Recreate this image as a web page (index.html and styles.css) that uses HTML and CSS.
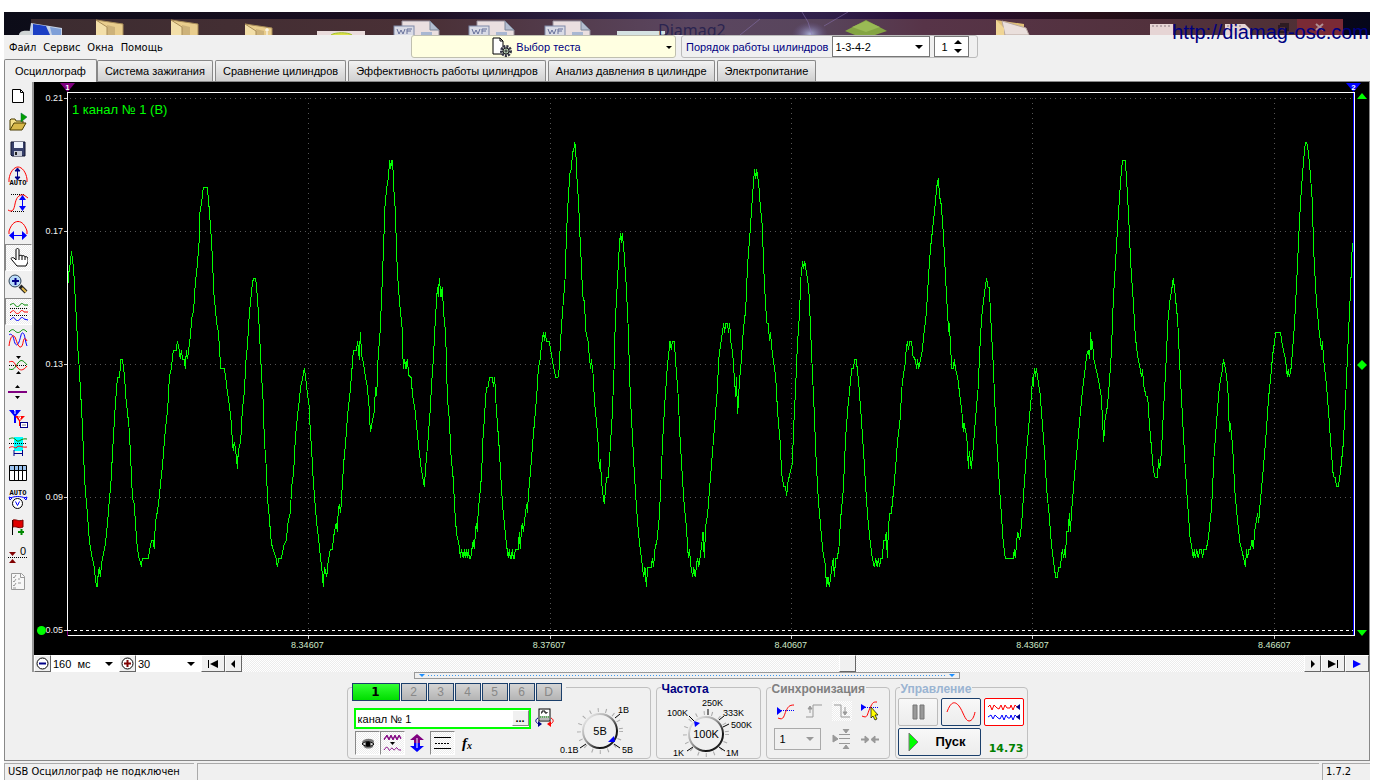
FILE: index.html
```html
<!DOCTYPE html>
<html lang="ru">
<head>
<meta charset="utf-8">
<title>Diamag2</title>
<link rel="stylesheet" href="styles.css">
</head>
<body>
<div class="app">
  <header class="titlebar">
    <svg class="titlebar-art" viewBox="4 12 1366 23" preserveAspectRatio="none" aria-hidden="true">
      <defs>
        <linearGradient id="sky"><stop offset="0" stop-color="#0c0c18"/><stop offset=".3" stop-color="#1c0f22"/><stop offset=".5" stop-color="#372a55"/><stop offset=".6" stop-color="#30204a"/><stop offset=".66" stop-color="#29103a"/><stop offset=".8" stop-color="#260f18"/><stop offset="1" stop-color="#05061a"/></linearGradient>
        <linearGradient id="glass"><stop offset="0" stop-color="#3c2c30"/><stop offset=".3" stop-color="#4a3036"/><stop offset=".5" stop-color="#5b4660"/><stop offset=".6" stop-color="#58455c"/><stop offset=".68" stop-color="#573448"/><stop offset="1" stop-color="#4e2f33"/></linearGradient>
        <radialGradient id="glow"><stop offset="0" stop-color="#b9c4ec" stop-opacity=".8"/><stop offset="1" stop-color="#6a5a9a" stop-opacity="0"/></radialGradient>
        <g id="folder"><path d="M0 0l27 4v12H0z" fill="#e9cd8d"/><path d="M0 0l11 7v9H0z" fill="#f3dfa9"/><path d="M11 5l8 2v9h-8z" fill="#cdb27a"/><path d="M0 0l27 4v12M0 0l11 7v9" fill="none" stroke="#a88c58"/></g>
        <g id="doc"><path d="M9 1h28l9 9v6H9z" fill="#eadfe0" stroke="#97919d"/><path d="M37 1v9h9z" fill="#b3bdd0" stroke="#7c8699"/><rect x="1" y="6" width="20" height="10" fill="#d9dbe6" stroke="#7e89a8"/><path d="M4 9l2 5 2-4 2 4 2-5M14 14V9h5M14 11h4" fill="none" stroke="#66709a"/><path d="M28 12h11v4H28z" fill="#a9b7d2"/></g>
      </defs>
      <rect x="4" y="12" width="1366" height="23" fill="url(#sky)"/>
      <rect x="31" y="19" width="1312" height="16" fill="url(#glass)"/>
      <ellipse cx="810" cy="34" rx="18" ry="12" fill="url(#glow)"/>
      <path d="M740 35l20-16M802 12l6 10 4 13M848 12l-24 14" stroke="#8e77b8" opacity=".5" fill="none"/>
      <path d="M31 23l31 5v7H29z" fill="#c5d2e6"/><path d="M33 24l13 2 4 9H33z" fill="#1b3fc4"/><path d="M50 27l11 2v6H52z" fill="#7fa0d8"/><path d="M19 35c0-4 5-5 11-4v4z" fill="#cfd4d4"/>
      <use href="#folder" x="96" y="20"/><use href="#folder" x="171" y="20"/><use href="#folder" x="245" y="24"/>
      <path d="M267 28v7M265 30h4" stroke="#fff"/>
      <rect x="317" y="31" width="48" height="4" fill="#eadcdc"/><path d="M331 35c4-3 17-3 21 0" fill="#dfe24a" stroke="#9fbf2a"/>
      <use href="#doc" x="393" y="20"/><use href="#doc" x="468" y="20"/><use href="#doc" x="544" y="20"/>
      <rect x="617" y="31" width="48" height="4" fill="#d5e2e2"/>
      <text x="658" y="36" class="titlebar-name">Diamag2</text>
      <path d="M845 31l21-11 21 11-12 4h-20z" fill="#84a443"/><path d="M852 27l14-6 14 6-14 5z" fill="#9aba55"/>
      <path d="M996 20l28 4v11h-28z" fill="#e0bf77"/><path d="M1002 21l24 7 3 7h-24z" fill="#eadfdc" stroke="#b9a7a0"/><path d="M996 20l8 8v7h-8z" fill="#f0d595"/>
      <path d="M1150 24h23v11h-23zM1225 24h20l5 5v6h-25z" fill="#e6d5d5"/><path d="M1152 26h19M1227 26h16" stroke="#8a7a80" stroke-dasharray="2 2"/>
      <rect x="1297" y="19" width="46" height="16" fill="#7a2a35"/><path d="M1316 24l7 6M1323 24l-7 6" stroke="#b09094" stroke-width="2"/><path d="M1279 26h7v6h-7zM1281 26v-2h7v6h-2" fill="none" stroke="#2d1b22" stroke-width="2"/>
    </svg>
    <a class="site-link" href="#site">http://diamag-osc.com</a>
  </header>

  <div class="menubar">
    <nav class="menu">
      <button type="button">Файл</button><button type="button">Сервис</button><button type="button">Окна</button><button type="button">Помощь</button>
    </nav>
    <button type="button" class="test-picker">
      <svg width="20" height="20" viewBox="0 0 20 20" aria-hidden="true"><path d="M1 1h7l3 3v13H1z" fill="#fff" stroke="#000"/><path d="M8 1v3h3" fill="none" stroke="#000"/><circle cx="14" cy="14" r="4.500" fill="#dfe5df" stroke="#334" stroke-width="3" stroke-dasharray="2 1"/><circle cx="14" cy="14" r="3" fill="#b4cdb4" stroke="#222"/><circle cx="14" cy="14" r="1" fill="#fff" stroke="#222"/></svg>
      <span>Выбор теста</span>
      <i class="caret"></i>
    </button>
    <div class="order-box">
      <label for="order">Порядок работы цилиндров</label>
      <span class="select-wrap order-select"><select id="order"><option>1-3-4-2</option></select><i class="caret"></i></span>
      <span class="spin"><input id="cyl" type="text" value="1" aria-label="Цилиндр"><i class="spin-arrows"><b class="up"></b><b class="caret"></b></i></span>
    </div>
  </div>

  <div class="tabs" role="tablist">
    <button type="button" role="tab" aria-selected="true" class="tab active">Осциллограф</button>
    <button type="button" role="tab" class="tab">Система зажигания</button>
    <button type="button" role="tab" class="tab">Сравнение цилиндров</button>
    <button type="button" role="tab" class="tab">Эффективность работы цилиндров</button>
    <button type="button" role="tab" class="tab">Анализ давления в цилиндре</button>
    <button type="button" role="tab" class="tab">Электропитание</button>
  </div>

  <main class="page">
    <div class="workspace">
      <div class="toolbar">
        <button type="button" aria-label="Новый"><svg viewBox="0 0 20 20"><path d="M4.500 4.500h8l3 3v10h-11z" fill="#fff" stroke="#000"/><path d="M12.500 4.500v3h3" fill="none" stroke="#000"/></svg></button>
        <button type="button" aria-label="Открыть"><svg viewBox="0 0 20 20"><path d="M2 18V8l1-1h4l1 2h7v3" fill="#f5e08a" stroke="#4a3d00"/><path d="M2 18l4-7h12l-4 7z" fill="#d8b84a" stroke="#4a3d00"/><path d="M13 1v9l6-5z" fill="#00a000" stroke="#064" stroke-width=".5"/></svg></button>
        <button type="button" aria-label="Сохранить"><svg viewBox="0 0 20 20"><path d="M3 3h14v14H4l-1-1z" fill="#37406a" stroke="#101530"/><path d="M6 3h9v6H6z" fill="#eef3fb"/><path d="M6 12h8v5H6z" fill="#c8ccd8"/><path d="M7 13h2v3H7z" fill="#222"/></svg></button>
        <button type="button" aria-label="Авто размах"><svg viewBox="0 0 20 20"><path d="M1 16v-3C2 6 6 1 10 1s8 5 9 12v3" fill="none" stroke="red"/><path d="M9.500 3v10M7 5l2.500-3L12 5zM7 11l2.500 3L12 11z" stroke="#008" fill="#008"/><text x="10" y="19" text-anchor="middle" class="tiny">AUTO</text></svg></button>
        <button type="button" aria-label="Амплитуда"><svg viewBox="0 0 20 20"><path d="M3 1.500h13M3 18.500h13" stroke="#000" stroke-dasharray="1 1"/><path d="M0 17c5 3 6-1 7-6s3-10 9-9l4 3" fill="none" stroke="red"/><path d="M14.500 3v14" stroke="#00f" stroke-width="1"/><path d="M11 7l3.500-5L18 7zM11 13l3.500 5L18 13z" fill="#00f"/></svg></button>
        <button type="button" aria-label="Ширина"><svg viewBox="0 0 20 20"><path d="M1 14v-3C3 5 6 1.500 10 1.500S17 5 19 11v3" fill="none" stroke="red"/><path d="M2 15.500h16" stroke="#00f"/><path d="M6 11v9l-5-4.500zM14 11v9l5-4.500z" fill="#00f"/></svg></button>
        <button type="button" class="pressed" aria-label="Рука"><svg viewBox="0 0 20 20"><path d="M9 19l-5-6c-2-2 0-3 2-2l2 2V3c0-2 3-2 3 0v6c1-1 3-1 3 0 1-1 3 0 3 1 1-1 3 0 3 2v3l-2 4z" fill="#fff" stroke="#000"/><path d="M11 9v4M14 9v4M17 10v3" stroke="#000"/></svg></button>
        <button type="button" aria-label="Масштаб"><svg viewBox="0 0 20 20"><path d="M12 12l6 6" stroke="#222" stroke-width="4"/><path d="M14 14l4 4" stroke="#e3b94a" stroke-width="2"/><circle cx="7" cy="7" r="6" fill="#b9dcfa" stroke="#345"/><path d="M4 7h7M7.500 4v7" stroke="#008" stroke-width="2"/></svg></button>
        <button type="button" class="pressed" aria-label="Раздельно"><svg viewBox="0 0 20 20"><g fill="none"><path d="M2 4c3-2 4-2 5 0s4 2 5 0 3-2 4 0l4 0" stroke="#080"/><path d="M2 7.500h18M2 14.500h18" stroke="#000" stroke-dasharray="1 1"/><path d="M2 12c3-3 4-3 5-1s4 2 5 0 3-2 4 0l4 0" stroke="red"/><path d="M2 19c3-3 4-3 5-1s4 2 5 0 3-2 4 0l4 1" stroke="#00f"/></g></svg></button>
        <button type="button" aria-label="Совмещённо"><svg viewBox="0 0 20 20"><g fill="none"><path d="M1 4c3-3 4-3 6-1s4 2 6 0 3-2 6 1" stroke="#080"/><path d="M1 7c2-2 4 0 5 5s3 7 5 2 2-10 4-9 2 8 4 13" stroke="#00f"/><path d="M1 18c1-8 3-11 5-10s3 10 6 11 3-7 4-8 2 0 3 2" stroke="red"/></g></svg></button>
        <button type="button" aria-label="Выравнивание"><svg viewBox="0 0 20 20"><path d="M8 1h5l-2.500 3zM8 19h5l-2.500-3z"/><path d="M1 10.500h18" stroke="#000" stroke-dasharray="1 1"/><path d="M1 14c5 2 6-2 9-6s5-3 9 2" fill="none" stroke="#080"/><path d="M1 7c5-2 5 1 8 5s6 4 10-1" fill="none" stroke="red"/></svg></button>
        <button type="button" aria-label="Уровень"><svg viewBox="0 0 20 20"><path d="M7 6h5L9.500 3zM7 14h5l-2.500 3z"/><path d="M0 10h19" stroke="#800080" stroke-width="2"/></svg></button>
        <button type="button" aria-label="Маркеры"><svg viewBox="0 0 20 20"><path d="M1 1h12L8 7v7H6V7z" fill="#00f"/><path d="M7 7h10l-5 5v5h-1v-5z" fill="red"/><path d="M6 2l1-1v4" stroke="#fff" fill="none"/><path d="M10 8h3l-2 2h2" stroke="#fff" fill="none"/><rect x="12.500" y="13.500" width="7" height="5" fill="#fff" stroke="#008"/><path d="M14 16h4" stroke="#888"/></svg></button>
        <button type="button" aria-label="Окно"><svg viewBox="0 0 20 20"><path d="M6 1h9v14H6z" fill="#0ff"/><path d="M1 3c4-2 5-1 8 2 3 1 4-3 10-2" fill="none" stroke="#080"/><path d="M1 12c4-3 5 0 7 0 3-4 5 0 11-1" fill="none" stroke="red"/><path d="M1 7.500h18" stroke="#000" stroke-dasharray="1 1"/><path d="M6 14v6M14.500 14v6M6 17.500h8" stroke="#008"/></svg></button>
        <button type="button" aria-label="Таблица"><svg viewBox="0 0 20 20"><path d="M1.500 2.500h17v15h-17z" fill="#fff" stroke="#000"/><path d="M2 3h16v4H2z" fill="#9cc3ef"/><path d="M1.500 7.500h17M6.500 3v14M10.500 3v14M14.500 3v14" stroke="#000"/></svg></button>
        <button type="button" aria-label="Автонапряжение"><svg viewBox="0 0 20 20"><text x="10" y="5" text-anchor="middle" class="tiny">AUTO</text><circle cx="9.500" cy="13.500" r="5" fill="#fff" stroke="#000"/><path d="M7.500 11.500l2 4 2-4" fill="none" stroke="#00f"/><path d="M2 10L1 7l3 1zM18 10l1-3-3 1zM3 8c3-2 10-2 14 0" fill="none" stroke="#00f"/></svg></button>
        <button type="button" aria-label="Флаг"><svg viewBox="0 0 20 20"><path d="M4.500 3v15" stroke="#000"/><path d="M5 3c4-1 5 2 10 0v7c-4 2-6-1-10 0z" fill="#e00000" stroke="#700"/><path d="M13.500 12v6M10 15h6" stroke="#080" stroke-width="2"/></svg></button>
        <button type="button" aria-label="Ноль"><svg viewBox="0 0 20 20"><path d="M1 8h7l-3.500 4zM1 19h7l-3.500-4z" fill="#800000"/><path d="M0 13.500h20" stroke="#000" stroke-dasharray="1 1"/><text x="12" y="11" class="zero">0</text></svg></button>
        <button type="button" aria-label="Отчёт"><svg viewBox="0 0 20 20"><path d="M3.500 2.500h10l3 3v13h-13z" fill="#f7f7f7" stroke="#999"/><path d="M12.500 2.500v4h4" fill="none" stroke="#999"/><path d="M5 6l1 1 2-3M5 10l1 1 2-3M5 14l1 1 2-3M5 17h3M10 8h2M10 12h3" fill="none" stroke="#999"/></svg></button>
      </div>

      <div class="scope">
        <div class="chart">
          <div class="y-axis"><span>0.21</span><span>0.17</span><span>0.13</span><span>0.09</span><span class="zero-level">0.05</span></div>
          <div class="plot">
            <svg class="plot-area" viewBox="201 276 3864 1632" preserveAspectRatio="none" aria-label="1 канал">
              <g class="grid">
                <path d="M210 295.500H4059M210 694.500H4059M210 1093.500H4059M210 1492.500H4059"/>
                <path d="M925.500 295V1906M1651.500 295V1906M2374.500 295V1906M3097.500 295V1906M3823.500 295V1906"/>
              </g>
              <path class="ticks" d="M192 295.500h9M192 694.500h9M192 1093.500h9M192 1492.500h9M192 1891.500h9M925.500 1908v9M1651.500 1908v9M2374.500 1908v9M3097.500 1908v9M3823.500 1908v9"/>
              <path class="cursor-a" d="M202.500 277V1908"/>
              <path class="cursor-b" d="M4060.500 277V1908"/>
              <path class="base" d="M204 1891.500H4059"/>
              <path class="frame" d="M202.500 1893V277.500H4063.500V1906.500H202.500"/>
              <g class="trace">
                <polyline transform="translate(180 390)" points="24,459 26,432 28,418 32,392 34,363 38,392 41,418 44,472 47,525 50,580 53,648 57,703 60,755 64,825 67,880 70,960 73,1028 76,1083 80,1123 85,1190 88,1230 92,1258 97,1285 103,1312 107,1355 111,1370 115,1330 118,1312 121,1342 125,1300 130,1272 136,1244 140,1205 144,1163 148,1110 152,1070 155,1017 158,962 161,908 164,855 168,800 171,758 174,742 179,742 182,688 187,688 191,716 194,744 197,797 203,852 207,892 211,960 215,1055 218,1108 223,1123 227,1190 232,1255 237,1285 242,1298 244,1312 247,1285 265,1285 269,1258 275,1231 280,1231 283,1258 286,1178 293,1140 298,1100 302,1056 308,1002 313,935 318,882 323,840 328,742 334,716 340,661 349,661 352,634 356,650 361,688 364,661 368,688 373,688 376,716 379,661 382,688 386,661 391,620 395,567 401,540 406,460 412,405 417,340 420,245 425,215 430,172 442,172 446,215 450,270 454,325 458,400 461,486 465,526 470,580 475,605 479,661 482,715 493,716 497,742 502,784 508,825 514,880 518,948 520,962 523,935 527,962 530,988 532,1016 535,962 542,935 547,840 553,785 558,690 563,640 566,580 570,530 576,472 580,445 587,445 592,500 596,560 601,660 605,740 610,825 613,930 618,1000 623,1110 628,1163 634,1240 641,1262 648,1285 652,1312 656,1285 664,1285 672,1245 679,1231 684,1178 691,1148 695,1070 701,1028 706,925 713,852 718,810 722,770 730,735 733,714 737,742 742,790 747,825 751,905 755,962 760,1055 765,1120 770,1178 775,1220 780,1270 785,1312 790,1370 793,1312 796,1320 800,1342 804,1298 811,1258 817,1258 823,1205 829,1178 832,1205 835,1137 838,1123 842,1150 846,1080 851,1000 857,935 863,852 870,790 875,730 880,661 889,661 893,634 898,690 901,606 905,675 911,703 916,740 922,770 928,840 931,907 936,880 942,850 947,771 950,799 954,690 960,610 965,500 970,370 975,230 980,173 985,145 989,90 992,118 995,92 998,92 1001,172 1006,240 1010,375 1015,470 1020,530 1026,590 1030,716 1034,688 1038,716 1042,688 1046,735 1053,742 1058,797 1065,840 1071,900 1077,960 1083,1010 1088,1040 1093,1070 1098,1000 1104,930 1110,850 1115,760 1120,690 1126,570 1132,472 1135,500 1138,445 1143,500 1147,472 1151,550 1157,610 1162,800 1168,870 1173,975 1180,1050 1185,1150 1190,1215 1194,1231 1199,1256 1201,1285"/>
                <polyline transform="translate(1350 390)" points="31,1285 34,1258 37,1272 40,1285 43,1258 46,1285 49,1258 52,1285 55,1258 58,1285 62,1285 65,1262 70,1231 73,1258 76,1210 79,1178 82,1205 85,1137 91,1080 95,1030 98,940 103,870 107,800 110,772 114,772 119,742 127,742 131,772 134,742 138,820 143,890 148,960 153,1050 158,1130 164,1190 169,1240 175,1285 178,1258 181,1285 184,1285 187,1258 190,1285 193,1285 196,1258 205,1258 208,1205 211,1258 214,1205 217,1178 220,1205 225,1163 230,1123 232,1150 236,1085 242,1020 248,940 254,870 260,800 265,716 270,690 274,650 279,615 281,606 283,634 286,606 289,634 298,634 303,665 309,703 317,742 324,742 328,715 331,640 338,540 345,450 350,300 355,200 360,130 364,118 368,65 371,62 374,37 377,55 380,130 386,220 389,300 394,400 398,498 403,515 408,606 414,634 419,690 422,716 424,688 429,730 434,820 440,880 445,950 448,1016 451,988 455,1060 459,1095 463,1123 467,1070 470,1042 475,1042 480,965 487,850 492,720 496,570 502,460 506,380 511,310 514,338 517,310 522,365 529,470 534,580 541,800 548,930 553,1030 558,1110 563,1180 568,1235 575,1290 581,1342 585,1312 589,1370 593,1312 604,1312 607,1285 611,1312 614,1262 621,1230 628,1160 633,1050 638,930 645,810 652,710 660,634 664,661 667,634 673,634 678,710 684,790 690,920 697,1040 703,1130 709,1190 715,1285 718,1258 723,1310 728,1342 731,1312 736,1342 740,1298 743,1285 746,1312 750,1285 756,1235 759,1205 763,1285 767,1190 773,1150 780,1060 788,960 795,870 802,780 806,690 811,650 818,600 821,580 824,608 827,580 832,580 836,608 839,580 842,632 848,670 853,742 857,800 859,742 863,853 868,760 874,690 880,600 887,540 893,400 900,310 906,220 911,150 914,118 917,147 920,118 926,160 931,230 937,290 941,410 947,530 951,580 954,580 959,634 961,606 966,660 972,705 977,740 983,850 990,930 995,1030 1001,1070 1006,1070 1010,1097 1014,1055 1020,1030 1027,1000 1031,890 1037,770 1042,650 1048,560 1053,440 1058,392 1061,418 1064,392 1070,432 1076,470 1081,580 1086,700 1092,830 1098,980 1105,1110 1112,1190 1118,1260 1125,1300 1130,1370 1134,1342 1138,1370 1142,1342 1147,1300 1150,1285 1153,1342 1157,1285 1162,1285 1167,1250 1172,1165 1180,1080 1187,920 1193,840 1200,770 1205,716 1210,716 1214,688 1218,688 1222,716 1227,770 1235,880 1241,970 1247,1070 1253,1160 1260,1230 1267,1285 1273,1312 1277,1285 1282,1312 1285,1285 1289,1312 1292,1285 1297,1285 1301,1231 1306,1231 1309,1205 1312,1285 1316,1180 1320,1150"/>
                <polyline transform="translate(2670 390)" points="0,1150 4,1150 10,1090 17,1010 22,940 30,870 36,770 40,735 46,700 49,650 53,634 55,661 59,634 65,634 68,675 76,690 80,716 83,688 86,716 90,695 97,660 102,610 109,550 116,430 122,350 127,305 134,240 140,172 145,145 149,200 154,225 160,310 166,430 172,540 176,606 178,580 183,675 186,716 190,716 193,688 196,715 203,742 210,800 216,850 220,907 222,880 228,910 232,940 235,1016 238,962 241,990 244,1016 250,950 257,860 264,780 270,650 275,560 281,510 287,460 290,445 294,472 298,472 302,560 309,690 315,830 322,960 329,1080 335,1165 340,1240 346,1285 370,1285 373,1258 376,1285 380,1235 383,1205 389,1231 395,1180 401,1090 410,960 417,880 423,810 428,742 430,772 433,714 436,742 439,714 443,742 450,790 457,880 464,970 470,1080 478,1160 484,1240 490,1290 497,1342 502,1342 506,1312 511,1312 517,1258 521,1285 524,1258 526,1285 530,1205 535,1205 538,1150 541,1205 546,1130 553,1040 562,950 570,860 578,775 585,720 590,675 595,661 599,688 602,606 605,661 607,634 612,690 620,725 627,760 634,800 638,880 641,935 645,870 652,830 658,760 664,670 670,510 677,390 684,270 690,180 695,110 698,92 706,92 711,170 716,260 722,400 729,500 736,620 743,680 750,715 755,742 757,716 762,770 768,799 773,800 778,880 785,960 790,1020 795,1042 802,1042 806,988 809,1016 814,970 820,850 828,700 834,570 840,510 845,480 850,445 855,490 863,570 870,720 878,870 885,1000 892,1110 900,1220 906,1258 910,1285 913,1258 916,1285 920,1258 925,1285 929,1258 934,1258 938,1285 941,1258 949,1258 955,1225 965,1130 972,980 980,870 988,770 993,740 998,715 1000,688 1004,705 1010,740 1015,800 1018,907 1021,880 1028,950 1035,1090 1042,1165 1050,1240 1055,1258 1062,1290 1067,1312 1069,1258 1073,1285 1076,1258 1081,1258 1086,1231 1090,1258 1094,1205 1100,1165 1103,1150 1106,1178 1110,1125 1116,1060 1123,980 1130,890 1136,800 1142,745 1148,675 1153,640 1157,606 1171,606 1175,632 1181,665 1187,690 1192,742 1195,716 1198,742 1203,716 1207,670 1213,590 1220,460 1228,280 1234,180 1241,90 1246,37 1250,37 1255,65 1260,120 1266,200 1272,380 1279,510 1286,590 1292,640 1295,661 1297,634 1302,700 1309,760 1316,850 1323,950 1330,1040 1335,1042 1340,1070 1345,1070 1352,1020 1360,940 1368,780 1375,620 1382,470 1387,340"/>
              </g>
            </svg>
            <span class="channel-name">1 канал № 1 (В)</span>
            <span class="cursor-flag flag-a">1</span>
            <span class="cursor-flag flag-b">2</span>
          </div>
          <div class="markers">
            <svg viewBox="0 0 10 6"><path d="M0 6l5-6 5 6z"/></svg>
            <svg viewBox="0 0 10 10"><path d="M5 0l5 5-5 5-5-5z"/></svg>
            <svg viewBox="0 0 10 6"><path d="M0 0l5 6 5-6z"/></svg>
          </div>
          <div class="x-axis"><span>8.34607</span><span>8.37607</span><span>8.40607</span><span>8.43607</span><span>8.46607</span></div>
        </div>

        <div class="transport">
          <button type="button" class="step" aria-label="Уменьшить"><svg width="13" height="13" viewBox="0 0 13 13"><circle cx="6.500" cy="6.500" r="5.500" fill="#fff" stroke="#000"/><path d="M3 6.500h7" stroke="#008" stroke-width="2"/></svg></button>
          <span class="select-wrap time-select"><select aria-label="Развёртка"><option>160 &nbsp;мс</option></select><i class="caret"></i></span>
          <button type="button" class="step" aria-label="Увеличить"><svg width="13" height="13" viewBox="0 0 13 13"><circle cx="6.500" cy="6.500" r="5.500" fill="#fff" stroke="#000"/><path d="M3 6.500h7M6.500 3v7" stroke="#800000" stroke-width="2"/></svg></button>
          <span class="select-wrap zoom-select"><select aria-label="Масштаб"><option>30</option></select><i class="caret"></i></span>
          <button type="button" class="step wide" aria-label="В начало"><svg width="12" height="8" viewBox="0 0 12 8"><path d="M1 0h1v8H1zM11 0v8L3 4z"/></svg></button>
          <button type="button" class="step" aria-label="Назад"><svg width="5" height="8" viewBox="0 0 5 8"><path d="M4 0v8L0 4z"/></svg></button>
          <input class="scroll" type="range" min="0" max="1000" value="571" aria-label="Прокрутка">
          <button type="button" class="step" aria-label="Вперёд"><svg width="5" height="8" viewBox="0 0 5 8"><path d="M1 0v8l4-4z"/></svg></button>
          <button type="button" class="step wide" aria-label="В конец"><svg width="12" height="8" viewBox="0 0 12 8"><path d="M10 0h1v8h-1zM1 0v8l8-4z"/></svg></button>
          <button type="button" class="step wide" aria-label="Воспроизвести"><svg width="10" height="8" viewBox="0 0 10 8"><path d="M1 0v8l8-4z" fill="#00f"/></svg></button>
        </div>
      </div>
    </div>

    <div class="splitter"><i></i><b></b><i></i></div>

    <div class="dock">
      <fieldset class="group channels">
        <legend>
          <button type="button" class="chan on">1</button><button type="button" class="chan">2</button><button type="button" class="chan">3</button><button type="button" class="chan">4</button><button type="button" class="chan">5</button><button type="button" class="chan">6</button><button type="button" class="chan">D</button>
        </legend>
        <div class="channels-body">
          <div class="channel-left">
            <div class="name-row">
              <div class="name-field"><input type="text" value="канал № 1" aria-label="Имя канала"><button type="button" aria-label="Выбрать">...</button></div>
              <svg class="device" width="20" height="20" viewBox="0 0 20 20" aria-hidden="true"><rect x="4" y="1" width="11" height="12" fill="#fff" stroke="#000"/><path d="M5 8h9v4H5z" fill="#b8b8b8"/><path d="M6 5h1V3h3v2h2V4" fill="none" stroke="#000"/><path d="M5 9h9" stroke="#0a0" stroke-dasharray="1 1"/><path d="M3 10c-4 2-2 6 2 6" fill="none" stroke="#008"/><path d="M3 13l4 3-4 3z" fill="#008"/><path d="M16 10c4 2 2 6-2 6" fill="none" stroke="red"/><path d="M16 13l-4 3 4 3z" fill="red"/></svg>
            </div>
            <div class="tool-row">
              <button type="button" class="pressed" aria-label="Показать"><svg viewBox="0 0 20 20"><path d="M5 9c2-4 10-4 12-1l-1 6c-3 2-7 2-9 0z" fill="#777"/><path d="M5 11c3-3 8-3 12 0-3 3-8 3-12 0z" fill="#ddd" stroke="#000"/><circle cx="11" cy="11" r="2.500"/></svg></button>
              <button type="button" class="pressed" aria-label="Фильтр"><svg viewBox="0 0 20 20"><path d="M2 6l3-4 2 4 2-4 2 4 2-4 2 4 2-4 2 3" fill="none" stroke="#800080"/><path d="M2 7l3-4 2 4 2-4 2 4 2-4 2 4 2-4 2 3" fill="none" stroke="#800080"/><path d="M8 9h5l-2.500 3z"/><path d="M2 17c3-5 4-2 5 0s2-4 4-1 3-3 4-1 2 2 4 2" fill="none" stroke="#800080"/></svg></button>
              <button type="button" aria-label="Сдвиг"><svg viewBox="0 0 20 20"><path d="M10 1l7 6H3zM7 7h6v3H7z" fill="#800080"/><path d="M10 19l7-6H3zM7 10h6v3H7z" fill="#00f"/><path d="M10 5v10" stroke="#fff"/></svg></button>
              <button type="button" class="pressed" aria-label="Линии"><svg viewBox="0 0 20 20"><path d="M2 4.500h17M2 15.500h17" stroke="#000"/><path d="M3 10.500h15" stroke="#000" stroke-dasharray="2 1"/></svg></button>
              <button type="button" aria-label="Функция" class="fx">f<sub>x</sub></button>
            </div>
          </div>
          <svg class="knob" width="88" height="56" viewBox="556 702 88 56" role="slider" aria-label="Диапазон" aria-valuetext="5В">
            <defs><linearGradient id="rim" x1="0" y1="0" x2="1" y2="1"><stop offset="0" stop-color="#fff"/><stop offset=".45" stop-color="#999"/><stop offset=".75" stop-color="#111"/><stop offset="1" stop-color="#333"/></linearGradient></defs>
            <circle cx="600" cy="732" r="21" class="dial"/>
            <circle cx="600" cy="732" r="17" fill="#f0f0f0" stroke="url(#rim)" stroke-width="2"/>
            <path d="M615 719l5-4M614 745l6 4M586 745l-6 4" stroke="#000"/>
            <path d="M608 743l6-6 1 6z" fill="#00f"/>
            <text x="600" y="736" text-anchor="middle" class="value">5В</text>
            <text x="618" y="714">1В</text><text x="560" y="754">0.1В</text><text x="622" y="754">5В</text>
          </svg>
        </div>
      </fieldset>

      <fieldset class="group freq">
        <legend>Частота</legend>
        <div class="freq-body">
          <svg class="knob" width="99" height="64" viewBox="657 694 99 64" role="slider" aria-label="Частота" aria-valuetext="100K">
            <circle cx="705" cy="732" r="21" class="dial"/>
            <circle cx="705" cy="732" r="17" fill="#f0f0f0" stroke="url(#rim)" stroke-width="2"/>
            <path d="M693 719l-5-5M707 713v-6M718 718l5-4M722 725l6-3M718 745l6 4M692 745l-6 4" stroke="#000"/>
            <path d="M693 719l6 2-5 4z" fill="#00f"/>
            <text x="705" y="736" text-anchor="middle" class="value">100K</text>
            <text x="666" y="714">100K</text><text x="701" y="704">250K</text><text x="722" y="714">333K</text><text x="730" y="726">500K</text><text x="672" y="754">1K</text><text x="725" y="754">1M</text>
          </svg>
        </div>
      </fieldset>

      <fieldset class="group sync">
        <legend>Синхронизация</legend>
        <div class="sync-body">
          <svg viewBox="0 0 20 20"><path d="M1 6v8l5-4z" fill="#00f"/><path d="M5 9.500h13" stroke="#00f" stroke-dasharray="1 1"/><path d="M2 17c6 3 6-3 8-7s3-6 8-6" fill="none" stroke="red"/></svg>
          <svg viewBox="0 0 20 20" class="off"><path d="M2 16h7V4h9M6 12V6"/><path d="M4 8l2-3 2 3z"/></svg>
          <svg viewBox="0 0 20 20" class="off dither"><path d="M2 4h7v12h9M13 6v6"/><path d="M11 11l2 3 2-3z"/></svg>
          <svg viewBox="0 0 20 20"><path d="M1 3v7l5-4z" fill="#00f"/><path d="M5 6.500h14" stroke="#00f" stroke-dasharray="1 1"/><path d="M2 15c6 3 5-2 8-8s3-6 7-6" fill="none" stroke="red"/><path d="M11 6v11l2-2 2 4 2-1-2-4h3z" fill="#ff0" stroke="#000" stroke-width=".7"/></svg>
          <span class="select-wrap sync-select"><select aria-label="Канал синхронизации" disabled><option>1</option></select><i class="caret"></i></span>
          <svg viewBox="0 0 20 20" class="off"><path d="M7 5.500h11M7 9.500h11M7 14.500h11"/><path d="M1 6v7l5-3zM11 0h6l-3 4zM11 20h6l-3-4z"/></svg>
          <svg viewBox="0 0 20 20" class="off"><path d="M1 10.500h7M12 10.500h7" stroke-width="2"/><path d="M5 7v7l4-3.500zM15 7v7l-4-3.500z"/></svg>
        </div>
      </fieldset>

      <fieldset class="group control">
        <legend>Управление</legend>
        <div class="control-body">
          <button type="button" class="key off-key" aria-label="Пауза"><svg width="16" height="16" viewBox="0 0 16 16"><path d="M3 1h4v14H3zM10 1h4v14h-4z" fill="#999" stroke="#777"/></svg></button>
          <button type="button" class="key" aria-label="Однократно"><svg width="30" height="22" viewBox="0 0 30 22"><path d="M1 11C5 0 9 0 13 5s6 15 10 15c3 0 5-4 6-9" fill="none" stroke="red"/></svg></button>
          <button type="button" class="key hot" aria-label="Непрерывно"><svg width="34" height="20" viewBox="0 0 34 20"><path d="M1 5l2-2 2 5 2-5 3 3 2 1 2-4 2 5 2-5 2 3 3 0 1-3 2 5 2-5 2 2" fill="none" stroke="red"/><path d="M1 15l3-2 2 4 2-4 3 3 2 1 2-4 2 5 2-5 2 3 2 0 1-3 2 5 2-5 2 2" fill="none" stroke="#00f"/><path d="M33 2v6l-4-3zM33 12v6l-4-3z" fill="#008"/></svg></button>
          <button type="button" class="key start"><svg width="12" height="20" viewBox="0 0 12 20"><path d="M1 1v18l9-9z" fill="#0f0" stroke="#777"/></svg><span>Пуск</span></button>
          <output class="reading">14.73</output>
        </div>
      </fieldset>
    </div>
  </main>

  <footer class="status">
    <span class="state">USB Осциллограф не подключен</span><span class="info"></span><span class="version">1.7.2</span>
  </footer>
</div>
</body>
</html>
```

FILE: styles.css
```css
:root {
  --face: #f0f0f0;
  --line: #888;
  --ui: "Liberation Sans", Arial, sans-serif;
  --tahoma: "DejaVu Sans Condensed", "DejaVu Sans", sans-serif;
}

* { box-sizing: border-box; }

body {
  margin: 0;
  min-height: 100vh;
  display: flex;
  background: #fff;
  font: 11px/14px var(--ui);
  color: #000;
}

button, input, select {
  font: inherit;
  color: inherit;
  margin: 0;
  padding: 0;
  border: 0;
  border-radius: 0;
  background: none;
  appearance: none;
}

.app {
  flex: 1;
  min-width: 0;
  margin: 12px 12px 4px 4px;
  display: flex;
  flex-direction: column;
  background: var(--face);
}

/* Title bar */
.titlebar { position: relative; height: 23px; }
.titlebar-art { display: block; width: 100%; height: 23px; }
.titlebar-name { font: 16px "Noto Sans", sans-serif; fill: #2b2450; }
.site-link {
  position: absolute;
  right: 1px;
  top: 9px;
  font-size: 20px;
  line-height: 22px;
  color: #000080;
  text-decoration: none;
}

/* Menu row */
.menubar {
  display: grid;
  grid-template-columns: 407px 265px auto 1fr;
  height: 24px;
}
.menu { display: flex; gap: 7px; padding: 2px 0 0 5px; align-items: center; height: 24px; font: 11px/14px var(--tahoma); }
.test-picker {
  position: relative;
  display: flex;
  align-items: center;
  justify-content: center;
  gap: 4px;
  height: 23px;
  padding-right: 14px;
  border: 1px solid #c0c0b0;
  border-radius: 3px;
  background: #ffffe1;
  color: #000080;
}
.caret, .up {
  display: block;
  width: 0;
  height: 0;
  border: 4px solid transparent;
  border-bottom: 0;
  border-top: 4px solid #000;
}
.up { border: 4px solid transparent; border-top: 0; border-bottom: 4px solid #000; }
.test-picker .caret { position: absolute; right: 3px; top: 10px; border-width: 3px 3px 0; }
.order-box {
  display: flex;
  align-items: center;
  gap: 4px;
  height: 23px;
  margin-left: 5px;
  padding: 0 8px 0 4px;
  border: 1px solid #bbb;
  border-radius: 3px;
  color: #000080;
}
.select-wrap { position: relative; display: block; color: #000; }
.select-wrap select { display: block; width: 100%; height: 100%; padding-left: 2px; background: #fff; }
.select-wrap .caret { position: absolute; right: 6px; top: 50%; margin-top: -2px; pointer-events: none; }
.order-select { width: 98px; height: 21px; border: 1px solid #777; }
.spin { position: relative; width: 35px; height: 21px; border: 1px solid #777; background: #fff; color: #000; }
.spin input { display: block; width: 20px; height: 19px; padding-left: 6px; }
.spin-arrows { position: absolute; right: 6px; top: 3px; display: grid; gap: 5px; }

/* Tabs */
.tabs { display: flex; align-items: flex-end; gap: 2px; height: 23px; border-bottom: 1px solid var(--line); }
.tab {
  height: 21px;
  padding: 0 7px;
  border: 1px solid var(--line);
  border-bottom: 0;
  border-radius: 2px 2px 0 0;
  background: linear-gradient(#f2f2f2, #d0d0d0);
}
.tab.active { height: 23px; margin: 0 -2px -1px 0; padding: 0 10px; background: var(--face); }

/* Page */
.page {
  flex: 1;
  display: flex;
  flex-direction: column;
  border: solid var(--line);
  border-width: 0 1px 1px;
}
.workspace { flex: 1; display: flex; }
.toolbar { width: 29px; padding-right: 0; border-right: 2px solid #999; }
.toolbar button { display: block; width: 27px; height: 27px; padding: 3px; }
.toolbar svg { display: block; width: 20px; height: 20px; margin-top: -1px; }
.pressed {
  border: 1px solid;
  border-color: #888 #fff #fff #888;
  background: repeating-conic-gradient(#fff 0 25%, #ececec 0 50%) 0 0 / 2px 2px;
}
.toolbar .pressed { padding: 2px; }
.tiny { font: bold 7px "Liberation Mono", monospace; }
.zero { font: 11px var(--ui); }

.scope { flex: 1; min-width: 0; display: flex; flex-direction: column; }
.chart {
  flex: 1;
  display: grid;
  grid-template-columns: 33px 1fr 14px;
  grid-template-rows: 10px 1fr 19px;
  min-height: 400px;
  background: #000;
}
.y-axis {
  grid-area: 2 / 1;
  display: flex;
  flex-direction: column;
  justify-content: space-between;
  align-items: flex-end;
  padding: 1px 4px 0 0;
  font-size: 9px;
  line-height: 11px;
  color: #f4f4f4;
}
.zero-level { position: relative; }
.zero-level::before {
  content: "";
  position: absolute;
  left: -8px;
  top: 1px;
  width: 9px;
  height: 9px;
  border-radius: 50%;
  background: #0f0;
}
.plot { grid-area: 2 / 2; position: relative; }
.plot-area { position: absolute; inset: 0; width: 100%; height: 100%; overflow: visible; shape-rendering: crispEdges; }
.plot-area path, .plot-area polyline { fill: none; vector-effect: non-scaling-stroke; stroke-width: 1px; }
.grid path { stroke: #555; stroke-dasharray: 1 4; }
.ticks { stroke: #ccc; }
.frame { stroke: #fff; }
.base { stroke: #fff; stroke-dasharray: 3 3; }
.cursor-a { stroke: #800080; }
.cursor-b { stroke: #00f; }
.trace polyline { stroke: #0f0; }
.channel-name { position: absolute; left: 5px; top: 10px; font-size: 13px; line-height: 16px; color: #0f0; }
.cursor-flag {
  position: absolute;
  top: -9px;
  width: 15px;
  height: 9px;
  clip-path: polygon(0 0, 100% 0, 50% 100%);
  font-size: 8px;
  font-weight: bold;
  line-height: 9px;
  text-align: center;
  color: #fff;
}
.flag-a { left: -7px; background: #800080; }
.flag-b { right: -6px; background: #00f; }
.markers {
  grid-area: 2 / 3;
  display: flex;
  flex-direction: column;
  justify-content: space-between;
  align-items: center;
  padding: 1px 0 0;
}
.markers svg { width: 10px; fill: #0f0; }
.x-axis {
  grid-area: 3 / 2;
  display: flex;
  justify-content: space-between;
  padding: 4px 5% 0 17.4%;
  font-size: 9px;
  line-height: 11px;
  color: #cfe8c8;
}

/* Transport row */
.transport { display: flex; height: 17px; background: #fff; }
.step {
  display: grid;
  place-items: center;
  flex: none;
  width: 17px;
  height: 17px;
  border: 1px solid;
  border-color: #fff #666 #666 #fff;
  background: var(--face);
}
.step.wide { width: 24px; }
.time-select { width: 68px; }
.zoom-select { width: 65px; }
.scroll {
  flex: 1;
  min-width: 0;
  height: 17px;
  background: repeating-conic-gradient(#fff 0 25%, #ececec 0 50%) 0 0 / 2px 2px;
}
.scroll::-webkit-slider-thumb {
  appearance: none;
  width: 17px;
  height: 17px;
  border: 1px solid;
  border-color: #fff #666 #666 #fff;
  background: var(--face);
}

/* Splitter */
.splitter {
  display: flex;
  align-items: center;
  align-self: center;
  gap: 3px;
  width: 40%;
  height: 7px;
  padding: 0 4px;
  border: 1px solid #999;
}
.splitter b { flex: 1; height: 1px; background: repeating-linear-gradient(90deg, #3a97f0 0 1px, transparent 1px 3px); }
.splitter i { border: 3px solid transparent; border-top: 3px solid #1e90ff; border-bottom: 0; }

/* Dock */
.dock { display: flex; justify-content: center; gap: 5px; padding: 8px 0 1px; }
.group {
  min-width: 0;
  height: 72px;
  margin: 0;
  padding: 0;
  border: 1px solid #c0c0c0;
  border-radius: 4px;
}
.group legend {
  float: left;
  margin: -6px 0 0 4px;
  padding: 0 1px;
  font-size: 12px;
  font-weight: bold;
  line-height: 14px;
  background: var(--face);
}
.channels { width: 304px; }
.channels legend { display: flex; gap: 1px; margin: -5px 0 0 4px; padding: 0 4px 0 0; }
.chan {
  width: 26px;
  height: 18px;
  border: 1px solid #1b3f6b;
  background: linear-gradient(#d4d4d4, #b4b4b4);
  color: #888;
  font-weight: normal;
}
.chan.on { width: 48px; background: linear-gradient(#3f3, #0d0); color: #000; font: bold 12px/14px "DejaVu Sans", sans-serif; }
.channels-body { clear: both; display: flex; justify-content: space-between; padding: 0 6px 0 6px; }
.channel-left { padding-top: 7px; }
.name-row { display: flex; gap: 4px; }
.name-field { display: flex; width: 177px; height: 21px; border: 1px solid #0f0; outline: 1px solid #0f0; outline-offset: -2px; background: #fff; }
.name-field input { flex: 1; min-width: 0; padding-left: 3px; }
.name-field button { width: 17px; height: 16px; margin: 1px; border: 1px solid; border-color: #fff #888 #888 #fff; background: var(--face); line-height: 8px; font-weight: bold; }
.device { flex: none; }
.tool-row { display: flex; margin: 2px 0 0 1px; }
.tool-row button { width: 25px; height: 24px; padding: 2px; }
.tool-row svg { display: block; margin: auto; width: 20px; height: 20px; }
.tool-row .pressed { padding: 0; }
.tool-row .fx { font: italic bold 15px/18px "Liberation Serif", serif; }
.fx sub { font-size: 10px; line-height: 8px; vertical-align: -1px; }
.knob { display: block; flex: none; font: 9px var(--ui); }
.knob .value { font-size: 11px; }
.knob .dial { fill: none; stroke: #aaa; stroke-width: 4; stroke-dasharray: 1 7; }

.freq { width: 105px; }
.freq legend { color: #000080; }
.freq-body { clear: both; padding-left: 1px; }
.freq-body .knob { margin-top: -3px; }
.sync { width: 124px; }
.sync legend { color: #808080; }
.sync-body {
  clear: both;
  display: grid;
  grid-template-columns: repeat(4, 28px);
  grid-template-rows: 24px 24px;
  gap: 4px 0;
  place-items: center;
  padding: 3px 5px 0;
}
.sync-body svg { width: 20px; height: 20px; }
.off path { stroke: #999; fill: none; }
.off path:last-child { fill: #999; }
.dither { background: repeating-conic-gradient(#fff 0 25%, #ececec 0 50%) 0 0 / 2px 2px; }
.sync-select { grid-column: span 2; justify-self: start; width: 47px; height: 22px; margin-left: 2px; border: 1px solid #aaa; }
.sync-select select { background: var(--face); color: #000; opacity: 1; padding-left: 5px; }
.sync-select .caret { border-top-color: #999; }
.control { width: 133px; }
.control legend { color: #9ab4d2; }
.control-body {
  clear: both;
  display: grid;
  grid-template-columns: repeat(3, 40px);
  grid-template-rows: 28px 28px;
  gap: 2px 3px;
  padding: 2px 2px 0;
}
.key {
  display: flex;
  align-items: center;
  justify-content: center;
  border: 1px solid #1b3f6b;
  border-radius: 2px;
  background: linear-gradient(#f8f8f8, #ececec);
}
.off-key { border-color: #bbb; }
.hot { border-color: red; background: #fff; }
.start { grid-column: span 2; justify-content: flex-start; gap: 16px; padding-left: 9px; font-size: 13px; font-weight: bold; }
.reading { align-self: end; justify-self: end; margin-bottom: 1px; font: bold 11px/13px "DejaVu Sans", sans-serif; color: #008000; }

/* Status bar */
.status { display: flex; gap: 3px; height: 19px; padding-top: 2px; font: 11px/14px var(--tahoma); }
.status span { padding: 1px 3px 0; border: solid #aaa; border-width: 1px 0 0 1px; white-space: nowrap; }
.state { width: 190px; }
.info { flex: 1; }
.version { width: 48px; }
```
